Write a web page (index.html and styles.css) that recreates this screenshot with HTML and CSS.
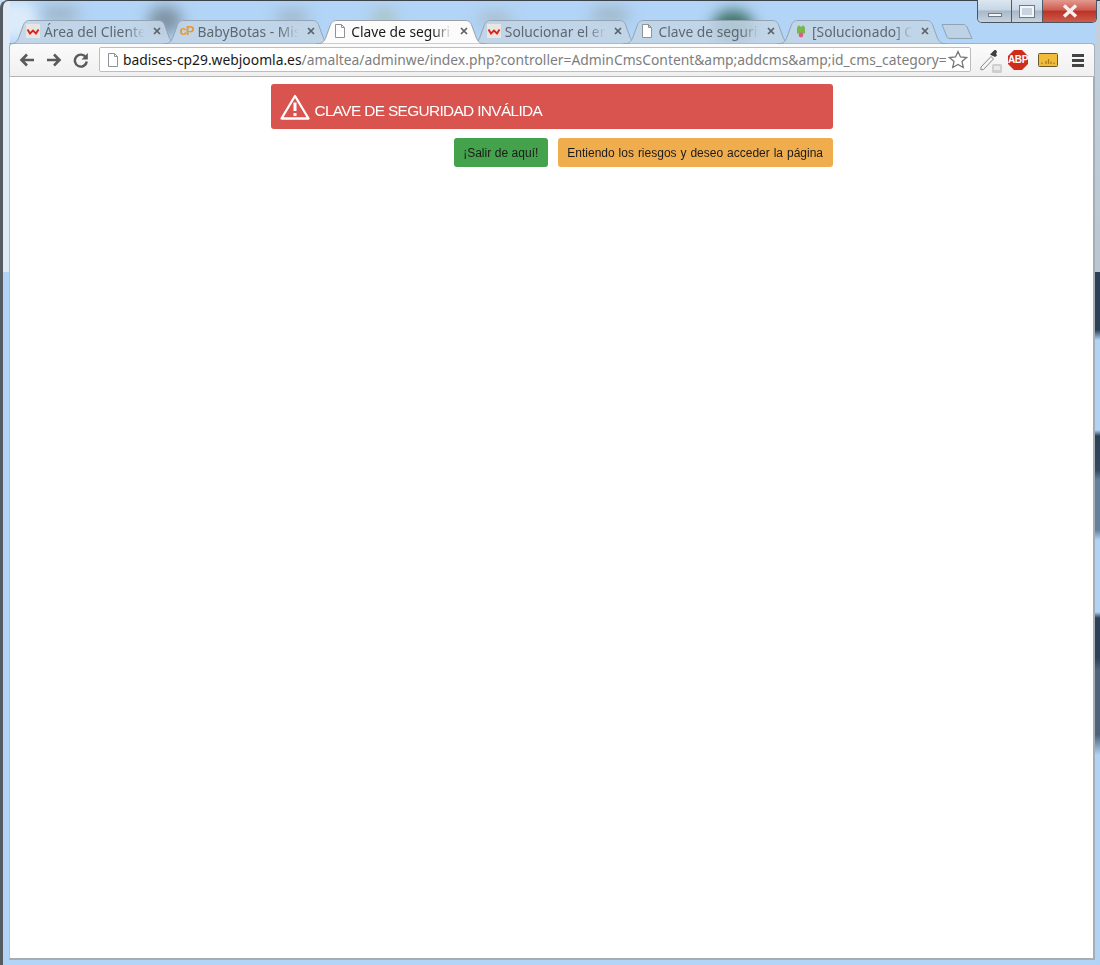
FILE: index.html
```html
<!DOCTYPE html>
<html lang="es">
<head>
<meta charset="utf-8">
<title>Clave de seguridad inválida</title>
<link rel="stylesheet" href="styles.css">
</head>
<body>
<svg class="defs" width="0" height="0" aria-hidden="true">
  <symbol id="tabshape" viewBox="0 0 170 24" preserveAspectRatio="none">
    <path d="M0 24 C6 24 8 22 10 17 L14 6 C15.500 2 17 .5 21 .5 H149 C153 .5 154.500 2 156 6 L160 17 C162 22 164 24 170 24 Z"/>
  </symbol>
  <symbol id="doc" viewBox="0 0 12 14">
    <path d="M1.500 .5 H7.500 L10.500 3.500 V13.500 H1.500 Z M7.500 .5 V3.500 H10.500" fill="#fff" stroke="#8d9399"/>
  </symbol>
  <symbol id="wlogo" viewBox="0 0 14 14">
    <rect width="14" height="14" fill="#e9e5e3"/>
    <path d="M1.500 5.500 L4 9.500 L7 6.500 L10 9.500 L12.500 5.500" fill="none" stroke="#d8261c" stroke-width="1.900"/>
  </symbol>
  <symbol id="close" viewBox="0 0 8 8">
    <path d="M1 1 L7 7 M7 1 L1 7" stroke="#5c6166" stroke-width="1.700"/>
  </symbol>
</svg>

<div class="backdrop">
  <span class="blob blob-l"></span>
  <span class="blob blob-a"></span>
  <span class="blob blob-b"></span>
  <span class="blob blob-c"></span>
  <span class="blob blob-d"></span>
  <span class="blob blob-g"></span>
  <span class="blob blob-e"></span>
  <span class="blob blob-f"></span>
  <span class="side side-l"></span>
  <span class="side side-r"></span>
</div>

<div class="window">
  <div class="controls">
    <span class="ctl ctl-min"><i class="min-glyph"></i></span>
    <span class="ctl ctl-max"><i class="max-glyph"></i></span>
    <span class="ctl ctl-close">
      <svg width="20" height="14" viewBox="0 0 20 14"><path d="M4 1.500 L16 12.500 M16 1.500 L4 12.500" stroke="#f4f1ef" stroke-width="3.400"/></svg>
    </span>
  </div>

  <div class="tabstrip">
    <div class="tab">
      <svg class="tab-bg"><use href="#tabshape"/></svg>
      <svg class="fav"><use href="#wlogo"/></svg>
      <span class="tab-title">Área del Cliente</span>
      <svg class="tab-x"><use href="#close"/></svg>
    </div>
    <div class="tab">
      <svg class="tab-bg"><use href="#tabshape"/></svg>
      <span class="fav fav-cp">cP</span>
      <span class="tab-title">BabyBotas - Mis sitios</span>
      <svg class="tab-x"><use href="#close"/></svg>
    </div>
    <div class="tab tab-active">
      <svg class="tab-bg"><use href="#tabshape"/></svg>
      <svg class="fav"><use href="#doc"/></svg>
      <span class="tab-title">Clave de seguridad inválida</span>
      <svg class="tab-x"><use href="#close"/></svg>
    </div>
    <div class="tab">
      <svg class="tab-bg"><use href="#tabshape"/></svg>
      <svg class="fav"><use href="#wlogo"/></svg>
      <span class="tab-title">Solucionar el error</span>
      <svg class="tab-x"><use href="#close"/></svg>
    </div>
    <div class="tab">
      <svg class="tab-bg"><use href="#tabshape"/></svg>
      <svg class="fav"><use href="#doc"/></svg>
      <span class="tab-title">Clave de seguridad inválida</span>
      <svg class="tab-x"><use href="#close"/></svg>
    </div>
    <div class="tab">
      <svg class="tab-bg"><use href="#tabshape"/></svg>
      <svg class="fav" viewBox="0 0 14 14">
        <path d="M3 3.500 L5 1 L6 2.500 H8 L9 1 L11 3.500 V9.500 H3 Z" fill="#76b947"/>
        <circle cx="7" cy="11" r="2.400" fill="#e4578f"/>
      </svg>
      <span class="tab-title">[Solucionado] Clave de seguridad</span>
      <svg class="tab-x"><use href="#close"/></svg>
    </div>
    <svg class="newtab" width="32" height="15" viewBox="0 0 32 15"><path d="M1 .5 H22 C24 .5 25 1.500 26 3 L31 14.500 H9 C7 14.500 6 13.500 5.500 12 Z" fill="#bed2e6" stroke="#8fa3b6"/></svg>
  </div>

  <div class="toolbar">
    <div class="nav">
      <svg width="16" height="14" viewBox="0 0 16 14"><path d="M15 7 H3 M8 1.500 L2.500 7 L8 12.500" fill="none" stroke="#5a5a5a" stroke-width="2.600"/></svg>
      <svg width="16" height="14" viewBox="0 0 16 14"><path d="M1 7 H13 M8 1.500 L13.500 7 L8 12.500" fill="none" stroke="#5a5a5a" stroke-width="2.600"/></svg>
      <svg width="16" height="16" viewBox="0 0 16 16"><path d="M13 5.500 A6 6 0 1 0 13.800 9.500" fill="none" stroke="#5a5a5a" stroke-width="2.400"/><path d="M14.800 1 V7.500 H8.500 Z" fill="#5a5a5a"/></svg>
    </div>
    <div class="omnibox">
      <svg class="omni-doc"><use href="#doc"/></svg>
      <span class="url"><span class="url-host">badises-cp29.webjoomla.es</span>/amaltea/adminwe/index.php?controller=AdminCmsContent&amp;amp;addcms&amp;amp;id_cms_category=</span>
      <svg class="star" width="20" height="19" viewBox="0 0 20 19"><path d="M10 1.500 L12.500 7 L18.500 7.600 L14 11.600 L15.300 17.500 L10 14.500 L4.700 17.500 L6 11.600 L1.500 7.600 L7.500 7 Z" fill="#fff" stroke="#777" stroke-width="1.300"/></svg>
    </div>
    <div class="exts">
      <span class="ext-dropper">
        <svg width="24" height="26" viewBox="0 0 24 26">
          <path d="M2 19 L12 8.500 L14.500 11 L4.500 21.500 L1.800 21.800 Z" fill="#f3f3f3" stroke="#8a8a8a"/>
          <path d="M12 5.500 L15 2.500 C16.500 1 19 3.500 17.500 5 L17 5.500 L18 7.500 L16 9 L11 6.500 Z" fill="#3f3f3f"/>
          <rect x="13" y="16" width="10" height="9" rx="1.500" fill="#cfcfcf"/>
          <rect x="15" y="18" width="6" height="4" fill="#e9e9e9"/>
        </svg>
      </span>
      <span class="ext-abp">ABP</span>
      <svg class="ext-meter" width="20" height="15" viewBox="0 0 20 15">
        <rect x=".5" y=".5" width="19" height="13" rx="1" fill="#f1bc3c" stroke="#6b5a2a"/>
        <path d="M4 11 V9.500 M8 11 V8 M10.500 11 V6 M13 11 V8.500 M16 11 V9.500" stroke="#a67c1c" stroke-width="1.300"/>
      </svg>
      <span class="ext-menu"><i></i><i></i><i></i></span>
    </div>
  </div>

  <main class="page">
    <div class="panel">
      <div class="alert">
        <svg width="30" height="26" viewBox="0 0 30 26"><path d="M15 2 L28.500 24.500 H1.500 Z" fill="none" stroke="#fff" stroke-width="2.300" stroke-linejoin="round"/><path d="M15 8.500 V17 M15 19 V22" stroke="#fff" stroke-width="3"/></svg>
        <span class="alert-text">CLAVE DE SEGURIDAD INVÁLIDA</span>
      </div>
      <div class="actions">
        <a class="btn btn-green">¡Salir de aquí!</a>
        <a class="btn btn-amber">Entiendo los riesgos y deseo acceder la página</a>
      </div>
    </div>
  </main>
</div>
</body>
</html>
```
FILE: styles.css
```css
* { box-sizing: border-box; }
html, body { margin: 0; height: 965px; overflow: hidden; }
body {
  position: relative;
  background: #b2d4f6;
  font-family: "Noto Sans", "Open Sans", sans-serif;
}
.defs { position: absolute; }

/* blurred desktop seen through the glass */
.backdrop { position: absolute; inset: 0; overflow: hidden; }
.blob { position: absolute; border-radius: 50%; filter: blur(7px); }
.blob-l { left: -10px; top: 0; width: 50px; height: 40px; background: #dcebfa; }
.blob-a { left: 40px; top: 6px; width: 40px; height: 16px; background: #9fb4c6; }
.blob-b { left: 148px; top: 6px; width: 34px; height: 28px; background: #7f93a3; }
.blob-c { left: 275px; top: 10px; width: 34px; height: 14px; background: #9fb4c6; }
.blob-d { left: 372px; top: 10px; width: 24px; height: 14px; background: #a9c0b8; }
.blob-g { left: 478px; top: 12px; width: 34px; height: 14px; background: #a9bcc8; }
.blob-e { left: 590px; top: 8px; width: 40px; height: 14px; background: #9db3c2; }
.blob-f { left: 712px; top: 10px; width: 42px; height: 34px; background: #3f7268; }
.side { position: absolute; top: 0; height: 272px; width: 7px; background: #dfeaf6; }
.side-l { left: 3px; }
.side-r {
  right: 0;
  width: 5px;
  height: 965px;
  background: linear-gradient(
    #c3d2e0 0, #b9c6d2 272px,
    #2e4054 272px, #2e4054 330px,
    #b0d3f6 340px, #b0d3f6 430px,
    #2e4054 436px, #34475b 470px,
    #66809c 480px, #66809c 530px,
    #b0d3f6 540px, #b0d3f6 612px,
    #2e4054 618px, #2e4054 658px,
    #4f6278 670px, #4f6278 735px,
    #b0d3f6 755px, #b0d3f6 965px
  );
}

/* window frame */
.window {
  position: relative;
  display: flex;
  flex-direction: column;
  height: 965px;
  padding: 19px 5px 5px 6px;
  border-top: 1px solid #3c4248;
  border-left: 3px solid #555b60;
  border-top-left-radius: 8px;
}

.controls {
  position: absolute;
  top: -1px;
  right: 3px;
  display: flex;
  width: 120px;
  height: 23px;
  border: 1px solid #4a5560;
  border-top: 0;
  border-radius: 0 0 5px 5px;
  overflow: hidden;
  filter: blur(.3px);
}
.ctl { display: flex; align-items: center; justify-content: center; }
.ctl-min { width: 34px; background: linear-gradient(#dbe6f1, #c8d6e4 45%, #a8b8c8 50%, #c6d3df); border-right: 1px solid #4f5a66; }
.ctl-max { width: 31px; background: linear-gradient(#dbe6f1, #c8d6e4 45%, #a8b8c8 50%, #c6d3df); border-right: 1px solid #4f5a66; }
.ctl-close { flex: 1; background: linear-gradient(#e39a90, #cf5c50 45%, #bb3427 52%, #cf5b4c); }
.min-glyph { display: block; width: 14px; height: 4px; margin-top: 8px; background: #f3f6f9; border: 1px solid #6d7a86; }
.max-glyph { display: block; width: 14px; height: 11px; background: #c7d4e0; border: 2px solid #f3f6f9; outline: 1px solid #6d7a86; }

/* tab strip */
.tabstrip {
  position: relative;
  z-index: 1;
  display: flex;
  align-items: flex-end;
  height: 24px;
  margin-bottom: -1px;
  filter: blur(.3px);
}
.tab {
  position: relative;
  flex: 0 0 170px;
  height: 24px;
  margin-right: -16.4px;
  padding: 0 0 2px 17px;
  display: flex;
  align-items: center;
  color: #5e6870;
  font-size: 13.8px;
}
.tab-bg { position: absolute; inset: 0; width: 100%; height: 100%; fill: rgba(196, 213, 230, .86); stroke: #92a3b3; stroke-width: 1; overflow: visible; }
.tab-active { z-index: 2; color: #1a1a1a; }
.tab-active .tab-bg { fill: #fbfbfb; stroke: #9aa0a6; }
.fav { position: relative; flex: 0 0 14px; width: 14px; height: 14px; margin-right: 4px; }
.fav-cp { font: bold 13px/14px "Liberation Sans", sans-serif; color: #e39a3a; letter-spacing: -1px; }
.tab-title {
  position: relative;
  width: 103px;
  white-space: nowrap;
  overflow: hidden;
  -webkit-mask-image: linear-gradient(90deg, #000 80%, transparent 98%);
  mask-image: linear-gradient(90deg, #000 80%, transparent 98%);
}
.tab-x { position: relative; width: 8px; height: 8px; margin-left: 6px; flex: none; }
.newtab { position: relative; z-index: 0; margin: 0 0 5px 10px; flex: none; }

/* toolbar */
.toolbar {
  position: relative;
  display: flex;
  align-items: center;
  height: 34px;
  flex: none;
  background: linear-gradient(#fbfbfb, #f0f0f0);
  border: 1px solid #a9b0b6;
  border-bottom: 1px solid #b5b5b5;
  border-radius: 4px 4px 0 0;
  padding: 0 0 0 8px;
  filter: blur(.3px);
}
.nav { display: flex; align-items: center; gap: 11px; width: 81px; padding-left: 1px; }
.omnibox {
  flex: 0 0 872px;
  height: 25px;
  display: flex;
  align-items: center;
  background: #fff;
  border: 1px solid #bdbdbd;
  border-radius: 2px;
  padding-left: 7px;
  margin-top: -1px;
}
.omni-doc { width: 12px; height: 14px; margin-right: 4px; flex: none; }
.url {
  flex: none;
  width: 825px;
  white-space: nowrap;
  overflow: hidden;
  font-size: 13.85px;
  color: #7d7d7d;
  line-height: 23px;
}
.url-host { color: #1a1a1a; }
.star { flex: none; margin-left: 0; }
.exts { display: flex; align-items: center; flex: 1; padding-left: 8px; }
.ext-dropper { display: flex; width: 24px; margin-top: 2px; }
.ext-abp {
  width: 20px;
  height: 20px;
  margin-left: 5px;
  background: #d02b1b;
  color: #fff;
  font: bold 10px/20px "Liberation Sans", sans-serif;
  letter-spacing: -.4px;
  text-align: center;
  clip-path: polygon(30% 0, 70% 0, 100% 30%, 100% 70%, 70% 100%, 30% 100%, 0 70%, 0 30%);
}
.ext-meter { margin-left: 10px; flex: none; }
.ext-menu { display: flex; flex-direction: column; gap: 2px; width: 12px; margin-left: 14px; }
.ext-menu i { display: block; height: 3px; background: #444; }

/* page */
.page {
  flex: 1;
  background: #fff;
  border-right: 2px solid #a5adb5;
  border-bottom: 2px solid #a5adb5;
  border-left: 1px solid #b9c0c6;
  padding-top: 7px;
  font-family: "Liberation Sans", Arial, sans-serif;
  position: relative;
}
.panel { width: 562px; margin: 0 auto; filter: blur(.3px); }
.alert {
  display: flex;
  align-items: center;
  height: 45px;
  padding-left: 9px;
  background: #d9534f;
  border-radius: 3px;
  color: #fff;
}
.alert-text { font-size: 15.4px; letter-spacing: -.65px; margin: 9px 0 0 5px; }
.actions { display: flex; justify-content: flex-end; gap: 10px; margin-top: 9px; }
.btn {
  display: block;
  height: 29px;
  padding: 0 9.5px;
  border-radius: 3px;
  font-size: 12px;
  line-height: 30px;
  color: #1b1b1b;
  white-space: nowrap;
}
.btn-green { background: #43a24b; word-spacing: .2px; }
.btn-amber { background: #f0ad4e; word-spacing: .6px; }
```
